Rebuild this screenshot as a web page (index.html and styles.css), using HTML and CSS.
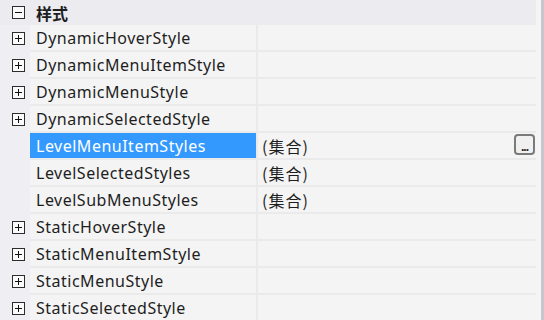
FILE: index.html
```html
<!DOCTYPE html>
<html>
<head>
<meta charset="utf-8">
<link rel="stylesheet" href="styles.css">
</head>
<body>
<div class="frame">
  <div class="grid">
    <div class="header">
      <div class="gutter"><span class="box minus"></span></div>
      <div class="cat">样式</div>
    </div>
    <div class="row"><div class="gutter"><span class="box plus"></span></div><div class="name">DynamicHoverStyle</div><div class="div"></div><div class="val"></div></div>
    <div class="row"><div class="gutter"><span class="box plus"></span></div><div class="name">DynamicMenuItemStyle</div><div class="div"></div><div class="val"></div></div>
    <div class="row"><div class="gutter"><span class="box plus"></span></div><div class="name">DynamicMenuStyle</div><div class="div"></div><div class="val"></div></div>
    <div class="row"><div class="gutter"><span class="box plus"></span></div><div class="name">DynamicSelectedStyle</div><div class="div"></div><div class="val"></div></div>
    <div class="row"><div class="gutter"></div><div class="name selected">LevelMenuItemStyles</div><div class="div"></div><div class="val">(集合)<span class="dots">...</span></div></div>
    <div class="row"><div class="gutter"></div><div class="name">LevelSelectedStyles</div><div class="div"></div><div class="val">(集合)</div></div>
    <div class="row"><div class="gutter"></div><div class="name">LevelSubMenuStyles</div><div class="div"></div><div class="val">(集合)</div></div>
    <div class="row"><div class="gutter"><span class="box plus"></span></div><div class="name">StaticHoverStyle</div><div class="div"></div><div class="val"></div></div>
    <div class="row"><div class="gutter"><span class="box plus"></span></div><div class="name">StaticMenuItemStyle</div><div class="div"></div><div class="val"></div></div>
    <div class="row"><div class="gutter"><span class="box plus"></span></div><div class="name">StaticMenuStyle</div><div class="div"></div><div class="val"></div></div>
    <div class="row"><div class="gutter"><span class="box plus"></span></div><div class="name">StaticSelectedStyle</div><div class="div"></div><div class="val"></div></div>
  </div>
  <div class="edge"></div>
  <div class="bar"></div>
</div>
</body>
</html>
```
FILE: styles.css
```css
html, body { margin: 0; padding: 0; }
body {
  width: 544px; height: 320px; overflow: hidden;
  background: #f4f4f4;
  font-family: "Noto Sans", "Noto Sans CJK SC", sans-serif;
  font-size: 16px;
  color: #1e1e1e;
}
.frame { display: flex; height: 320px; }
.grid { width: 536px; display: flex; flex-direction: column; }
.edge { width: 5px; background: #f4f4f4; }
.bar { width: 3px; background: #c6c6cf; }
.header { display: flex; height: 25px; background: #ececf0; flex: none; }
.header .gutter { background: #ececf0; }
.cat { display: flex; align-items: center; padding-left: 6px; font-weight: bold; font-family: "Noto Sans CJK SC", sans-serif; font-size: 16px; }
.row { display: flex; height: 27px; flex: none; }
.gutter {
  width: 30px; flex: none; background: #efeff3;
  display: flex; align-items: center; padding-left: 12px; box-sizing: border-box;
}
.name {
  width: 226px; flex: none; box-sizing: border-box; padding-left: 6px;
  display: flex; align-items: center;
  border-bottom: 2px solid #eaeaea;
  white-space: nowrap; letter-spacing: 0.5px;
}
.name.selected { background: #3399ff; color: #ffffff; border-bottom-color: #eaeaea; }
.div { width: 2px; flex: none; background: #eaeaea; }
.val {
  flex: 1; display: flex; align-items: center; padding-left: 4px;
  border-bottom: 2px solid #eaeaea; position: relative;
  font-family: "Noto Sans CJK SC", sans-serif; font-size: 16px; letter-spacing: 1px;
}
.box {
  width: 13px; height: 13px; box-sizing: border-box;
  border: 1px solid #2c2c2c; background: #fafafa; position: relative;
}
.box::before {
  content: ""; position: absolute; left: 2px; top: 5px; width: 7px; height: 1px; background: #111;
}
.plus::after {
  content: ""; position: absolute; left: 5px; top: 2px; width: 1px; height: 7px; background: #111;
}
.dots {
  position: absolute; right: 1px; top: 1px;
  width: 21px; height: 21px; box-sizing: border-box;
  border: 2px solid #7a7a7a; border-radius: 4px; background: #f0f0f0;
  font-family: "Noto Sans", sans-serif;
  font-size: 12px; font-weight: bold; line-height: 22px; text-align: center; letter-spacing: -1px;
  color: #1e1e1e;
}
```
